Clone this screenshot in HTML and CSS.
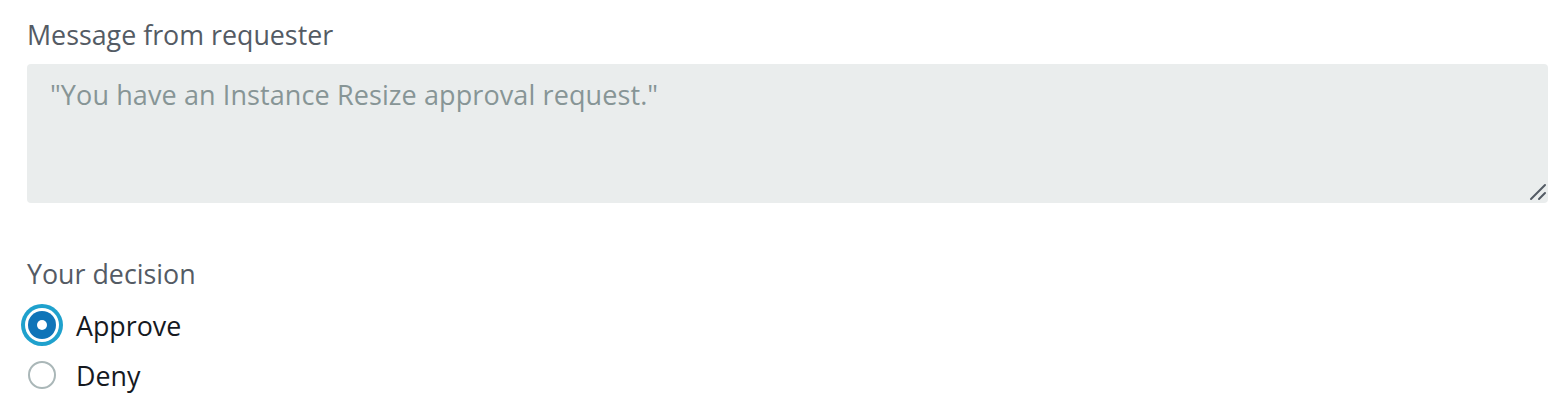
FILE: index.html
```html
<!DOCTYPE html>
<html>
<head>
<meta charset="utf-8">
<link rel="stylesheet" href="styles.css">
</head>
<body>
<div class="form">
  <div class="field">
    <label class="field-label" for="msg">Message from requester</label>
    <div class="textarea-wrap">
      <textarea id="msg" class="message" readonly>"You have an Instance Resize approval request."</textarea>
      <svg class="resize-handle" width="18" height="18" viewBox="0 0 18 18">
        <line x1="2" y1="16" x2="16" y2="2" stroke="#545b64" stroke-width="2" stroke-linecap="round"/>
        <line x1="10" y1="16" x2="16" y2="10" stroke="#545b64" stroke-width="2" stroke-linecap="round"/>
      </svg>
    </div>
  </div>
  <div class="field decision">
    <div class="field-label">Your decision</div>
    <div class="radio-group">
      <label class="radio-row">
        <span class="radio checked"><span class="dot"></span></span>
        <span class="radio-text">Approve</span>
      </label>
      <label class="radio-row">
        <span class="radio"></span>
        <span class="radio-text">Deny</span>
      </label>
    </div>
  </div>
</div>
</body>
</html>
```

FILE: styles.css
```css
html, body {
  margin: 0;
  padding: 0;
  background: #ffffff;
}
body {
  font-family: "Open Sans", "Noto Sans", Arial, sans-serif;
  color: #16191f;
}
.form {
  padding: 17px 18px 0 27px;
  display: flex;
  flex-direction: column;
}
.field-label {
  display: block;
  font-size: 26.8px;
  line-height: 36px;
  color: #545b64;
}
.textarea-wrap {
  position: relative;
  margin-top: 11px;
}
.message {
  display: block;
  box-sizing: border-box;
  width: 100%;
  height: 139px;
  margin: 0;
  border: none;
  border-radius: 4px;
  background: #eaeded;
  color: #879596;
  font-family: inherit;
  font-size: 27px;
  letter-spacing: 0.1px;
  line-height: 36px;
  padding: 13px 22px 13px 23px;
  resize: none;
  outline: none;
}
.resize-handle {
  position: absolute;
  right: 1px;
  bottom: 2px;
}
.decision {
  margin-top: 53px;
}
.radio-group {
  display: flex;
  flex-direction: column;
  margin-top: 8px;
}
.radio-row {
  display: flex;
  align-items: center;
  height: 50px;
}
.radio {
  box-sizing: border-box;
  width: 28px;
  height: 28px;
  margin-left: 1px;
  border-radius: 50%;
  border: 2px solid #aab7b8;
  background: #fff;
  display: flex;
  align-items: center;
  justify-content: center;
}
.radio.checked {
  border: none;
  background: #0f74b8;
  box-shadow: 0 0 0 3px #ffffff, 0 0 0 7px #1fa1cd;
}
.dot {
  width: 10px;
  height: 10px;
  border-radius: 50%;
  background: #fff;
}
.radio-text {
  margin-left: 20px;
  font-size: 26.8px;
  color: #16191f;
}
```
